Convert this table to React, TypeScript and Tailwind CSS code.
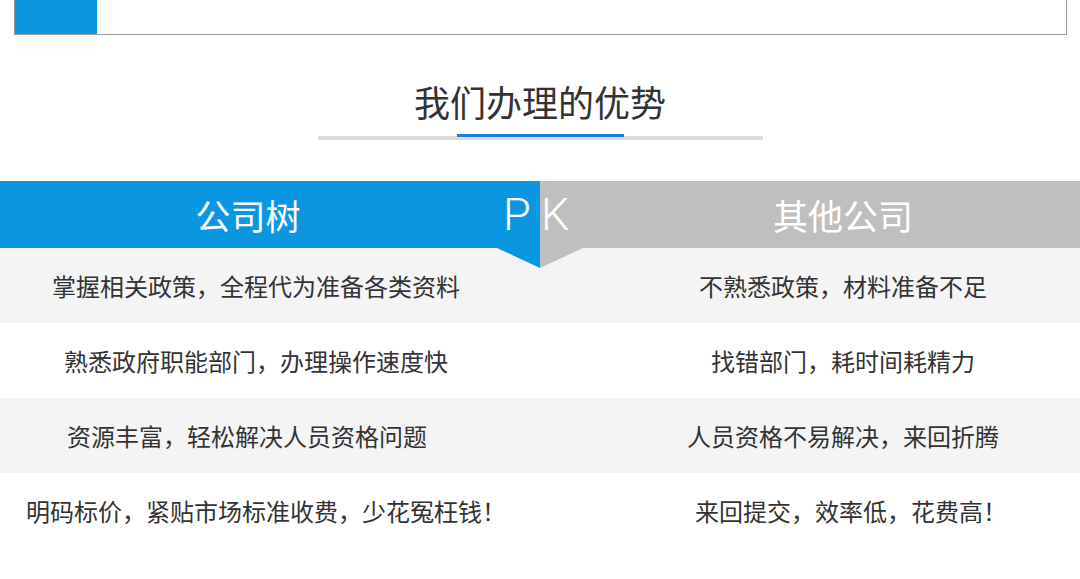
const rows = [
  { ours: "掌握相关政策，全程代为准备各类资料", theirs: "不熟悉政策，材料准备不足", bg: "bg-[#f4f4f4]", oursPad: "", theirsPad: "" },
  { ours: "熟悉政府职能部门，办理操作速度快", theirs: "找错部门，耗时间耗精力", bg: "bg-white", oursPad: "", theirsPad: "" },
  { ours: "资源丰富，轻松解决人员资格问题", theirs: "人员资格不易解决，来回折腾", bg: "bg-[#f4f4f4]", oursPad: "pr-[18px]", theirsPad: "" },
  { ours: "明码标价，紧贴市场标准收费，少花冤枉钱！", theirs: "来回提交，效率低，花费高！", bg: "bg-white", oursPad: "pl-[20px]", theirsPad: "pl-[16px]" },
];

export default function App() {
  return (
    <div
      className="w-[1080px] h-[579px] overflow-hidden bg-white text-[#333]"
      style={{ fontFamily: '"Noto Sans CJK SC", "Noto Sans", sans-serif' }}
    >
      {/* top tab strip */}
      <div className="ml-[14px] w-[1053px] h-[35px] flex border border-t-0 border-[#9a9a9a]">
        <div className="w-[82px] h-full bg-[#0b96e1]" />
      </div>

      {/* title */}
      <h2 className="mt-[48px] h-[36px] leading-[36px] text-[36px] text-center text-[#333]">我们办理的优势</h2>
      <div className="mt-[17px] flex justify-center">
        <div className="w-[445px] h-[4px] bg-[#dcdcdc] flex justify-center">
          <div className="w-[167px] h-[3px] -mt-[2px] bg-[#1b80e0]" />
        </div>
      </div>

      {/* PK header */}
      <div className="relative mt-[41px] h-[67px] flex text-white">
        <div className="w-[540px] flex items-center bg-[#0b96e1]">
          <div className="w-[496px] text-center text-[35px] leading-none">公司树</div>
          <div className="pl-[7px] text-[45px] leading-none font-light" style={{ fontFamily: "Roboto, sans-serif" }}>
            P
          </div>
        </div>
        <div className="w-[540px] flex items-center bg-[#bfbfbf]">
          <div className="w-[66px] pl-[1px] text-[45px] leading-none font-light" style={{ fontFamily: "Roboto, sans-serif" }}>
            K
          </div>
          <div className="flex-1 text-center text-[35px] leading-none">其他公司</div>
        </div>
        <svg className="absolute top-full left-[497px] w-[86px] h-[20px]" viewBox="0 0 86 20">
          <polygon points="0,0 43,0 43,20" fill="#0b96e1" />
          <polygon points="43,0 86,0 43,20" fill="#bfbfbf" />
        </svg>
      </div>

      {/* comparison rows */}
      {rows.map((r) => (
        <div key={r.ours} className={`h-[75px] flex items-center text-[24px] leading-none ${r.bg}`}>
          <div className={`w-[512px] text-center ${r.oursPad}`}>{r.ours}</div>
          <div className="w-[94px]" />
          <div className={`flex-1 text-center ${r.theirsPad}`}>{r.theirs}</div>
        </div>
      ))}
    </div>
  );
}
